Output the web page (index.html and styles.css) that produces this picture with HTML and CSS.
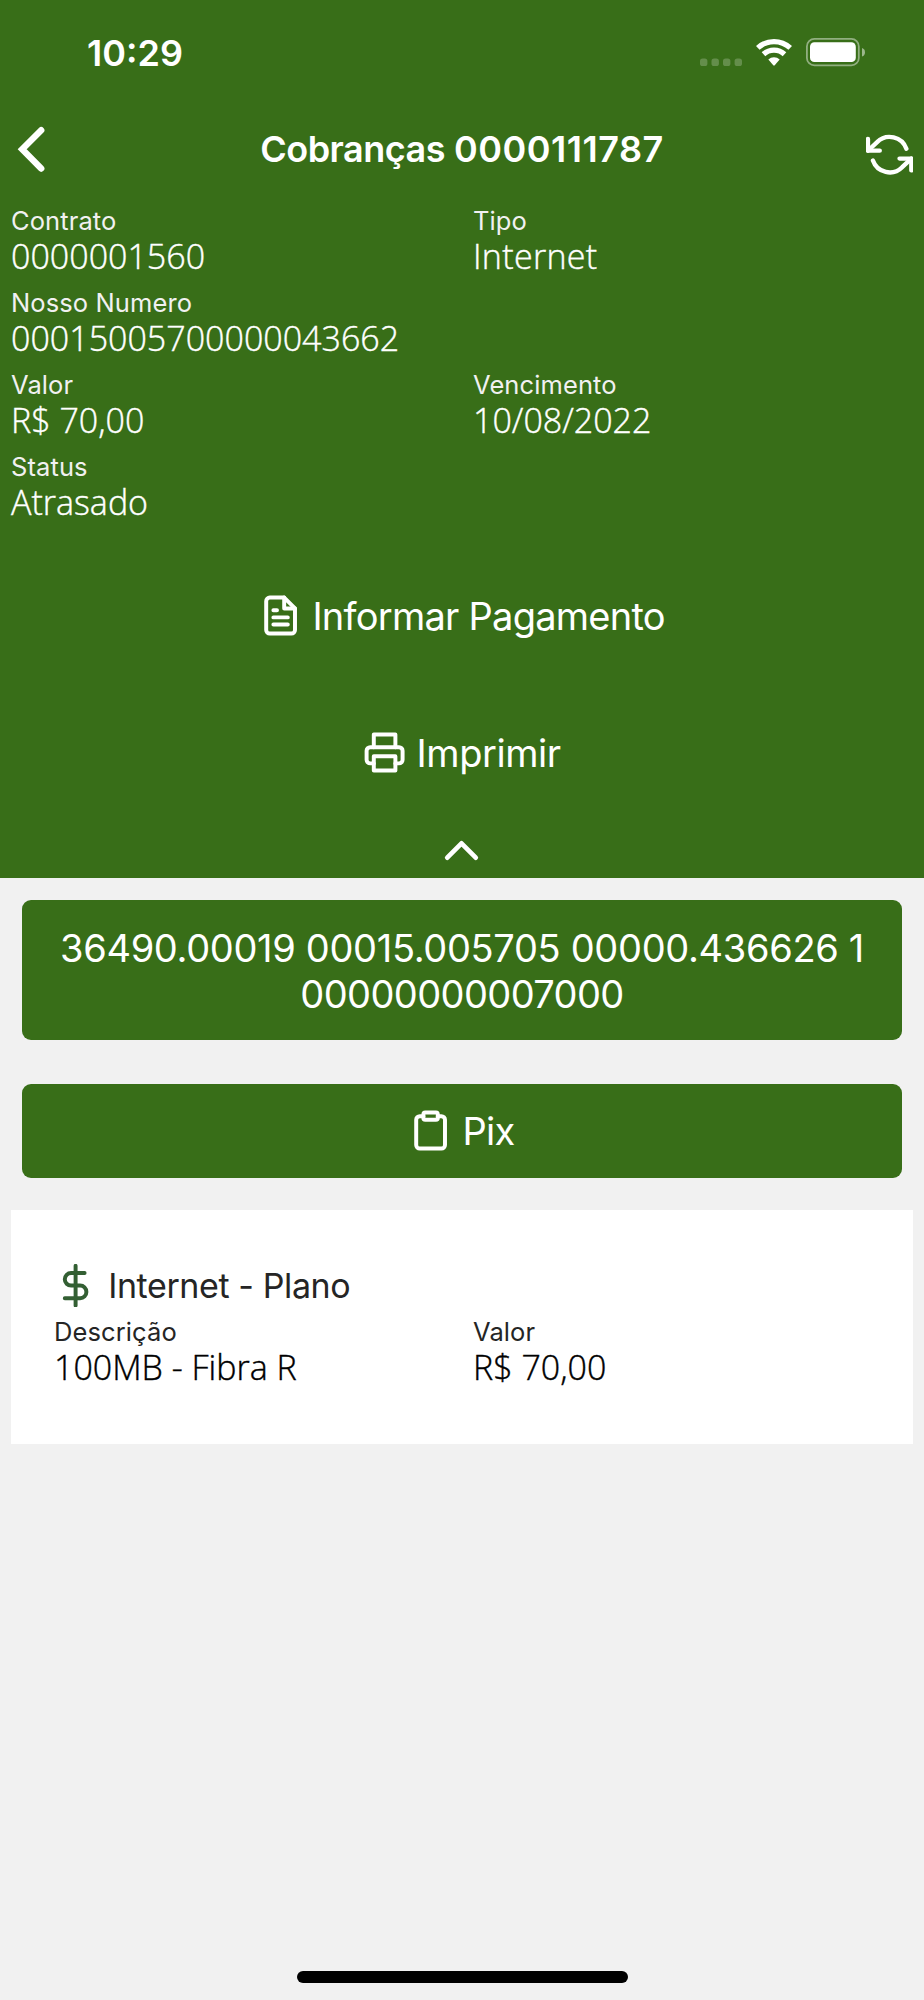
FILE: index.html
```html
<!DOCTYPE html>
<html lang="pt-BR">
<head>
<meta charset="utf-8">
<title>Cobranças 0000111787</title>
<link rel="stylesheet" href="styles.css">
</head>
<body>
<div class="screen">
  <header class="top">
    <div class="status">
      <span class="time">10:29</span>
      <svg class="status-icons" viewBox="0 0 170 34" width="170" height="34">
        <g fill="#fff" opacity=".22"><rect x="2" y="22.4" width="7.4" height="7.6" rx="2.6"/><rect x="13.5" y="22.4" width="7.4" height="7.6" rx="2.6"/><rect x="25" y="22.4" width="7.4" height="7.6" rx="2.6"/><rect x="36.6" y="22.4" width="7.4" height="7.6" rx="2.6"/></g>
        <g fill="none" stroke="#fff" stroke-width="5.3"><path d="M59.8 11.9a24 24 0 0 1 32.4 0"/><path d="M65.5 18.2a15.5 15.5 0 0 1 21 0"/></g>
        <path d="M70.3 23.4a8.5 8.5 0 0 1 11.4 0L76.7 29.3q-.7.7-1.4 0z" fill="#fff"/>
        <rect x="108.9" y="2.9" width="51.9" height="26.5" rx="7.5" fill="none" stroke="#fff" stroke-opacity=".45" stroke-width="1.8"/>
        <rect x="112" y="6.3" width="45.8" height="19.8" rx="4.4" fill="#fff"/>
        <path d="M164 12v8.6q3-1 3-4.3t-3-4.3z" fill="#fff" opacity=".5"/>
      </svg>
    </div>
    <div class="nav">
      <svg class="back" viewBox="0 0 32 48" width="32" height="48"><path d="M26.2 5.2L7.2 24.3l19 19.2" fill="none" stroke="#fff" stroke-width="6.4" stroke-linecap="round"/></svg>
      <h1 class="title"><span class="title-word">Cobranças</span> <span class="title-number">0000111787</span></h1>
      <svg class="refresh icon" viewBox="0 0 24 24"><path d="M1 4v6h6M23 20v-6h-6"/><path d="M20.49 9A9 9 0 0 0 5.64 5.64L1 10m22 4l-4.64 4.36A9 9 0 0 1 3.51 15"/></svg>
    </div>
    <div class="fields">
      <div class="field"><div class="label">Contrato</div><div class="value">0000001560</div></div>
      <div class="field"><div class="label">Tipo</div><div class="value word">Internet</div></div>
      <div class="field wide"><div class="label">Nosso Numero</div><div class="value">00015005700000043662</div></div>
      <div class="field"><div class="label">Valor</div><div class="value">R$ 70,00</div></div>
      <div class="field"><div class="label">Vencimento</div><div class="value">10/08/2022</div></div>
      <div class="field wide"><div class="label">Status</div><div class="value">Atrasado</div></div>
    </div>
    <div class="action inform">
      <svg class="icon" viewBox="0 0 24 24"><path d="M14 2H6a2 2 0 0 0-2 2v16a2 2 0 0 0 2 2h12a2 2 0 0 0 2-2V8z"/><path d="M14 2v6h6M16 13H8M16 17H8M10 9H8"/></svg>
      <span>Informar Pagamento</span>
    </div>
    <div class="action print">
      <svg class="icon" viewBox="0 0 24 24"><path d="M6 9V2h12v7"/><path d="M6 18H4a2 2 0 0 1-2-2v-5a2 2 0 0 1 2-2h16a2 2 0 0 1 2 2v5a2 2 0 0 1-2 2h-2"/><path d="M6 14h12v8H6z"/></svg>
      <span>Imprimir</span>
    </div>
    <div class="collapse"><svg class="icon" viewBox="0 0 24 24"><path d="M18 15l-6-6-6 6"/></svg></div>
  </header>
  <main class="content">
    <div class="button code"><span>36490.00019 00015.005705 00000.436626 1</span><br><span class="code-end">00000000007000</span></div>
    <div class="button pix">
      <svg class="icon" viewBox="0 0 24 24"><path d="M16 4h2a2 2 0 0 1 2 2v14a2 2 0 0 1-2 2H6a2 2 0 0 1-2-2V6a2 2 0 0 1 2-2h2"/><rect x="8" y="2" width="8" height="4" rx="1"/></svg>
      <span>Pix</span>
    </div>
    <section class="card">
      <div class="plan">
        <svg class="icon dollar" viewBox="0 0 24 24"><path d="M12 1v22M17 5H9.5a3.5 3.5 0 0 0 0 7h5a3.5 3.5 0 0 1 0 7H6"/></svg>
        <span>Internet - Plano</span>
      </div>
      <div class="details">
        <div class="field"><div class="label">Descrição</div><div class="value">100MB - Fibra R</div></div>
        <div class="field"><div class="label">Valor</div><div class="value">R$ 70,00</div></div>
      </div>
    </section>
  </main>
  <div class="home"></div>
</div>
</body>
</html>
```
FILE: styles.css
```css
* { box-sizing: border-box; }
body { margin: 0; font-family: Inter, "Liberation Sans", sans-serif; }
.screen { width: 924px; height: 2000px; background: #f1f1f1; display: flex; flex-direction: column; overflow: hidden; }
.top { height: 878.3px; flex: none; background: #386e18; color: #fff; }
.icon { fill: none; stroke: currentColor; stroke-width: 2.2; stroke-linecap: round; stroke-linejoin: round; width: 43.2px; height: 43.2px; flex: none; }
.status { height: 108px; padding: 31px 56px 0 87px; display: flex; justify-content: space-between; align-items: flex-start; }
.time { font-size: 36px; font-weight: 600; line-height: 44px; }
.status-icons { margin-top: 5px; }
.nav { height: 96px; display: grid; grid-template-columns: 60px 1fr 64px; align-items: start; padding: 0 11px 0 15px; }
.back { margin-top: 17px; }
.title { margin: 19px 0 0; font-size: 36px; font-weight: 600; line-height: 44px; text-align: center; white-space: nowrap; }
.title-word { letter-spacing: -.5px; }
.title-number { letter-spacing: .5px; }
.refresh { width: 47.3px; height: 47.3px; margin-top: 22.6px; justify-self: end; }
.fields { display: grid; grid-template-columns: 462px 1fr; padding-left: 11px; grid-auto-rows: 82px; }
.wide { grid-column: 1 / -1; }
.label { font-size: 25.5px; line-height: 33px; color: #f1f1f1; letter-spacing: .1px; }
.value { padding-top: 1px; font-family: "Open Sans", "Noto Sans", sans-serif; font-weight: 300; font-size: 34px; line-height: 37px; -webkit-text-stroke: .4px currentColor; }
.word { letter-spacing: .3px; }
.action { display: flex; justify-content: center; align-items: center; gap: 10px; height: 138px; font-size: 38px; line-height: 46px; letter-spacing: -.45px; }
.inform { margin-top: 14.5px; letter-spacing: -.75px; }
.print { height: 137px; }
.collapse { display: flex; justify-content: center; padding-right: 1.5px; }
.collapse .icon { width: 57px; height: 57px; stroke-width: 2; }
.content { flex: 1; padding: 21.7px 11px 0; }
.button { margin: 0 11px; background: #386e18; color: #fff; border-radius: 9px; font-size: 38px; line-height: 46px; }
.code { height: 140.3px; padding-top: 24.6px; text-align: center; white-space: nowrap; letter-spacing: -.33px; }
.code-end { letter-spacing: -.6px; }
.pix { margin-top: 43.5px; height: 94px; display: flex; justify-content: center; align-items: center; gap: 10px; letter-spacing: -.7px; }
.card { margin-top: 32.5px; height: 234px; padding: 54px 43px 0; background: #fff; }
.plan { display: flex; align-items: center; gap: 11px; height: 43px; font-size: 34px; letter-spacing: -.4px; color: #252525; }
.dollar { color: #335f33; }
.details { display: grid; grid-template-columns: 419px 1fr; margin-top: 8px; }
.details .label { color: #252525; }
.details .value { color: #000; }
.home { width: 331px; height: 11.5px; border-radius: 6px; background: #000; margin: 0 auto 17.2px; flex: none; }
```
